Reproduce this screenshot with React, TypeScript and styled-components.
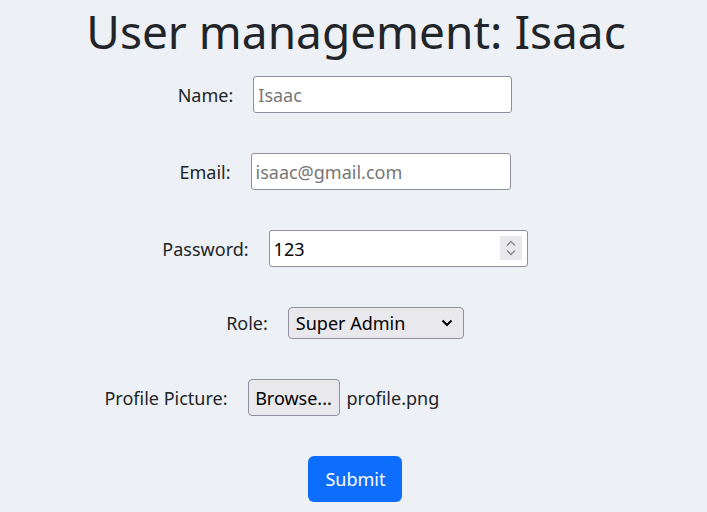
import React from "react";
import styled, { createGlobalStyle } from "styled-components";

const GlobalStyle = createGlobalStyle`
  html, body {
    margin: 0;
    padding: 0;
    background: #edf0f5;
  }
  body {
    font-family: "Noto Sans", "Open Sans", sans-serif;
    color: #212529;
  }
`;

const Page = styled.div`
  display: flex;
  flex-direction: column;
  align-items: center;
  width: 707px;
  min-height: 512px;
`;

const Title = styled.h1`
  margin: 0 0 0 5px;
  font-size: 46px;
  font-weight: 400;
  line-height: 63px;
  color: #212529;
`;

const Form = styled.form`
  display: flex;
  flex-direction: column;
  align-items: center;
  gap: 40px;
  margin-top: 13px;
`;

const Row = styled.div`
  display: flex;
  align-items: center;
  gap: 20px;
  margin-right: 17px;
`;

const Label = styled.label`
  font-size: 18px;
  line-height: 24px;
  color: #212529;
`;

const Field = styled.div<{ $w?: number }>`
  position: relative;
  width: ${({ $w }) => $w || 259}px;
`;

const TextInput = styled.input`
  box-sizing: border-box;
  width: 100%;
  height: 37px;
  padding: 0 4px;
  border: 1px solid #8f8f9d;
  border-radius: 3px;
  background: #ffffff;
  font-family: "Noto Sans", "Open Sans", sans-serif;
  font-size: 18px;
  color: #000;
  outline: none;
  &::placeholder {
    color: #767676;
  }
`;

const Spinner = styled.span`
  position: absolute;
  right: 6px;
  top: 6px;
  width: 22px;
  height: 24px;
  background: #e9e9ed;
  display: flex;
  align-items: center;
  justify-content: center;
`;

const SelectBox = styled.div`
  box-sizing: border-box;
  width: 176px;
  height: 32px;
  border: 1px solid #8f8f9d;
  border-radius: 4px;
  background: #e9e9ed;
  display: flex;
  align-items: center;
  justify-content: space-between;
  padding: 0 10px 0 7px;
  font-size: 18px;
  color: #000;
`;

const FileWidget = styled.div`
  width: 338px;
  display: flex;
  align-items: center;
  gap: 7px;
  font-size: 18px;
`;

const BrowseButton = styled.button`
  box-sizing: border-box;
  height: 37px;
  width: 92px;
  padding: 0;
  border: 1px solid #8f8f9d;
  border-radius: 4px;
  background: #e9e9ed;
  font-family: "Noto Sans", "Open Sans", sans-serif;
  font-size: 18px;
  color: #000;
`;

const SubmitButton = styled.button`
  box-sizing: border-box;
  width: 94px;
  height: 46px;
  border: none;
  border-radius: 6px;
  background: #0d6efd;
  color: #ffffff;
  font-family: "Noto Sans", "Open Sans", sans-serif;
  font-size: 18px;
  margin-left: 4px;
`;

export default function App() {
  return (
    <Page>
      <GlobalStyle />
      <Title>User management: Isaac</Title>
      <Form onSubmit={(e) => e.preventDefault()}>
        <Row>
          <Label>Name:</Label>
          <Field>
            <TextInput placeholder="Isaac" />
          </Field>
        </Row>
        <Row>
          <Label>Email:</Label>
          <Field $w={260}>
            <TextInput placeholder="isaac@gmail.com" />
          </Field>
        </Row>
        <Row>
          <Label>Password:</Label>
          <Field>
            <TextInput defaultValue="123" />
            <Spinner>
              <svg width="12" height="18" viewBox="0 0 12 18" fill="none" stroke="#8a8a8a" strokeWidth="1.4">
                <path d="M2 6.5 L6 2.5 L10 6.5" />
                <path d="M2 11.5 L6 15.5 L10 11.5" />
              </svg>
            </Spinner>
          </Field>
        </Row>
        <Row>
          <Label>Role:</Label>
          <SelectBox>
            <span>Super Admin</span>
            <svg width="12" height="8" viewBox="0 0 12 8" fill="none" stroke="#000" strokeWidth="2">
              <path d="M1.5 1.5 L6 6 L10.5 1.5" />
            </svg>
          </SelectBox>
        </Row>
        <Row>
          <Label>Profile Picture:</Label>
          <FileWidget>
            <BrowseButton type="button">Browse...</BrowseButton>
            <span>profile.png</span>
          </FileWidget>
        </Row>
        <SubmitButton type="submit">Submit</SubmitButton>
      </Form>
    </Page>
  );
}
